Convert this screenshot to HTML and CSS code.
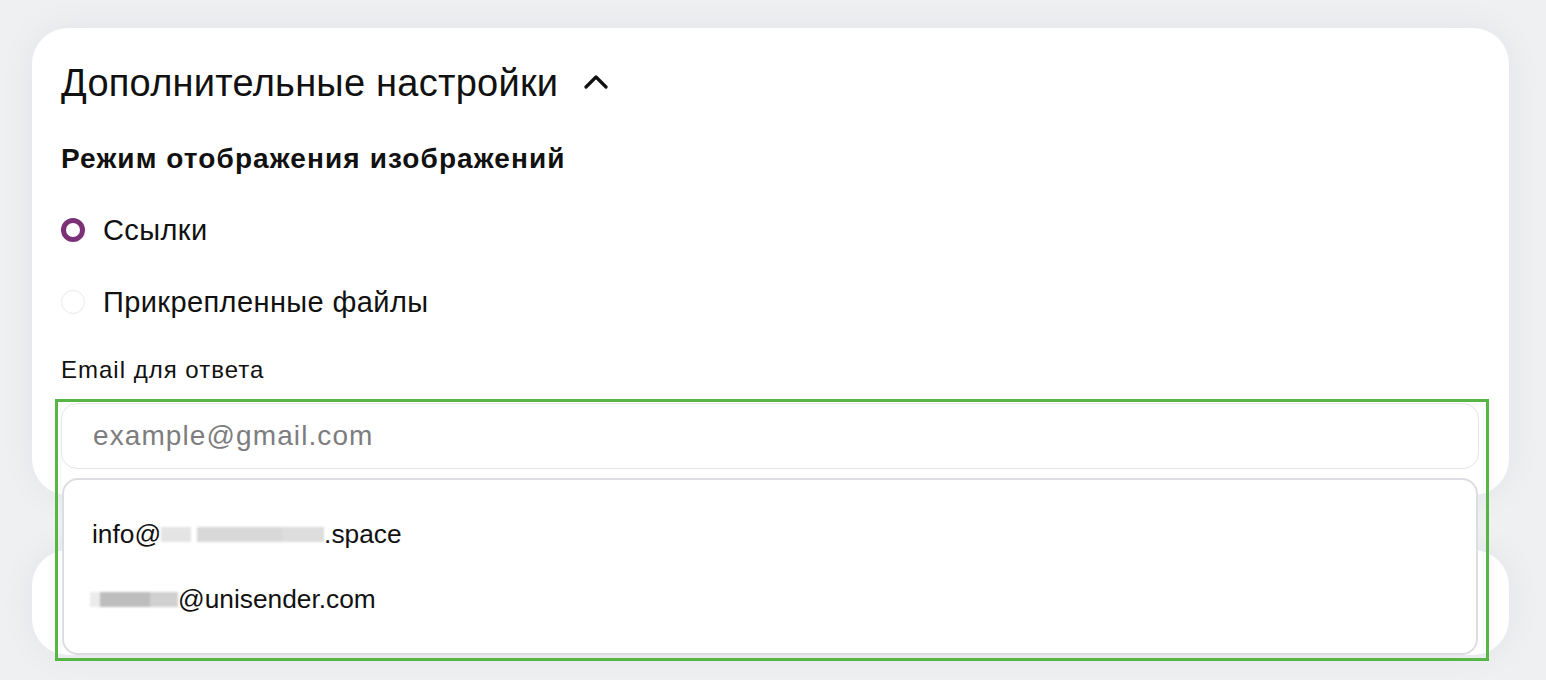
FILE: index.html
```html
<!DOCTYPE html>
<html lang="ru">
<head>
<meta charset="utf-8">
<title>Дополнительные настройки</title>
<link rel="stylesheet" href="styles.css">
</head>
<body>
<div class="page">
  <section class="card card-main">
    <div class="title-row">
      <h2 class="title">Дополнительные настройки</h2>
      <svg class="chevron" width="24" height="16" viewBox="0 0 24 16"><path d="M2 13 L12 3 L22 13" fill="none" stroke="#111" stroke-width="3.2" stroke-linecap="round" stroke-linejoin="round"/></svg>
    </div>
    <h3 class="subtitle">Режим отображения изображений</h3>
    <label class="radio-row"><span class="radio checked"></span><span class="radio-label">Ссылки</span></label>
    <label class="radio-row"><span class="radio"></span><span class="radio-label">Прикрепленные файлы</span></label>
    <div class="field-label">Email для ответа</div>
    <div class="field">
      <div class="input"><span class="placeholder">example@gmail.com</span></div>
      <div class="dropdown">
        <div class="option">info@<span class="redact r1"><i class="s1"></i><i class="s2"></i><i class="s3"></i></span>.space</div>
        <div class="option"><span class="redact r2"><i class="s4"></i><i class="s5"></i><i class="s6"></i></span>@unisender.com</div>
      </div>
      <div class="highlight"></div>
    </div>
  </section>
  <section class="card card-second"></section>
</div>
</body>
</html>
```

FILE: styles.css
```css
* { box-sizing: border-box; }
html, body { margin: 0; padding: 0; }
body {
  background: #eff0f2;
  font-family: "Liberation Sans", Arial, sans-serif;
  color: #111;
  width: 1546px;
  height: 680px;
  overflow: hidden;
}
.page {
  padding: 28px 37px 0 32px;
  display: flex;
  flex-direction: column;
  gap: 55px;
}
.card {
  background: #fff;
  border-radius: 36px;
  box-shadow: 0 0 36px rgba(30, 35, 50, 0.06);
}
.card-main {
  position: relative;
  z-index: 2;
  height: 467px;
  padding: 35px 30px 0 29px;
  display: flex;
  flex-direction: column;
}
.card-second {
  height: 105px;
}
.title-row {
  display: flex;
  align-items: center;
  gap: 26px;
  height: 40px;
}
.title {
  margin: 0;
  font-size: 38px;
  font-weight: 400;
  line-height: 40px;
  letter-spacing: 0.25px;
}
.chevron { display: block; margin-top: -3px; }
.subtitle {
  margin: 40px 0 0;
  font-size: 28px;
  font-weight: 700;
  line-height: 32px;
  letter-spacing: 1.1px;
}
.radio-row {
  display: flex;
  align-items: center;
  gap: 18px;
  height: 32px;
  margin-top: 39px;
}
.radio-row + .radio-row { margin-top: 40px; }
.radio {
  width: 24px;
  height: 24px;
  border-radius: 50%;
  border: 1px solid #e8e9ec;
  flex: none;
}
.radio.checked {
  border: 5px solid #7b3078;
}
.radio-label {
  font-size: 29px;
  line-height: 32px;
  letter-spacing: 0.4px;
}
.field-label {
  margin-top: 38px;
  font-size: 24px;
  line-height: 28px;
  letter-spacing: 1px;
}
.field {
  position: relative;
  margin-top: 19px;
}
.input {
  height: 66px;
  border: 1px solid #e4e5e9;
  border-radius: 16px;
  padding-left: 31px;
  display: flex;
  align-items: center;
}
.placeholder {
  font-size: 28px;
  color: #7d7d80;
  letter-spacing: 1.1px;
}
.dropdown {
  position: absolute;
  left: 1px;
  right: 1px;
  top: 75px;
  height: 177px;
  background: #fff;
  border: 2px solid #dcdde2;
  border-radius: 16px;
  padding: 38px 28px 0;
  display: flex;
  flex-direction: column;
  gap: 33px;
}
.option {
  font-size: 26.3px;
  line-height: 32px;
  display: flex;
  align-items: center;
}
.redact {
  display: inline-flex;
  align-items: center;
  height: 20px;
  filter: blur(1px);
}
.redact i { display: block; height: 15px; }
.r1 { width: 163px; }
.s1 { width: 30px; background: #e4e4e4; }
.s2 { width: 85px; background: #d8d8d8; margin-left: 6px; }
.s3 { width: 42px; background: #dddddd; }
.r2 { width: 88px; margin-left: -2px; }
.s4 { width: 10px; background: #ebebeb; }
.s5 { width: 50px; background: #bdbdbd; }
.s6 { width: 28px; background: #d0d0d0; }
.highlight {
  position: absolute;
  left: -6px;
  right: -10px;
  top: -4px;
  height: 262px;
  border: 3px solid #57b545;
  pointer-events: none;
}
```
